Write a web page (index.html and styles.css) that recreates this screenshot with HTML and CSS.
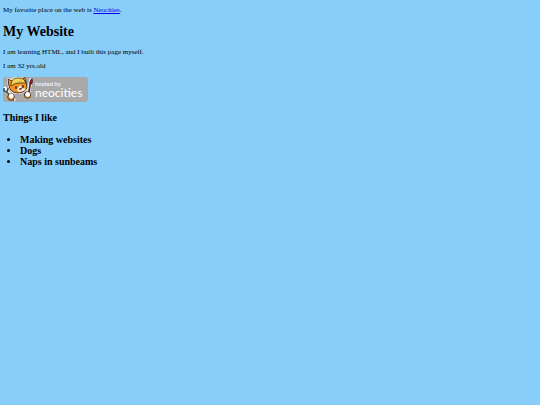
FILE: index.html
```html
<!DOCTYPE html>
<html lang="en">
<head>
    <meta charset="UTF-8">
    <meta name="viewport" content="width=device-width, initial-scale=1.0">
    <title>My Website</title>
    <link rel="stylesheet" href="styles.css">
</head>
<body>

<p>My favorite place on the web is <a href="https://neocities.org">Neocities</a>.</p>

<h1>My Website</h1>

<p>I am learning HTML, and I built this page myself.</p>

<p>I am 32 yrs.old</p>

<!-- Hosting badge -->
<svg class="badge" viewBox="0 0 85 26" role="img" aria-label="Hosted by Neocities">
    <rect width="85" height="25" rx="3" fill="#a9a9a9"/>
    <!-- white outline behind the cat and its tools -->
    <g fill="none" stroke="#fff" stroke-linejoin="round" stroke-linecap="round">
        <path d="M2 11l3 4 6 8" stroke-width="3"/>
        <path d="M25 18l3-15" stroke-width="3.400"/>
        <path d="M5 2l3 1q8-5 14 1l2 7q-3 5-10 5-7-1-8-7z" stroke-width="2"/>
    </g>
    <!-- fork -->
    <path d="M1 11v3l3 1 1-4M4 15l7 9" fill="none" stroke="#4b5256" stroke-width="1.6"/>
    <!-- paint brush -->
    <path d="M25.500 17l2-11" stroke="#5b2b20" stroke-width="1.8"/>
    <path d="M27 7q-1-3 2-5.500 1.500 3-.5 5.500z" fill="#9c1838" stroke="#331520" stroke-width="0.7"/>
    <!-- head -->
    <path d="M5 2l4 2 12-1 2 1 1 7q-3 5-10 5-7-1-8-7z" fill="#f39327" stroke="#33251c" stroke-width="0.9"/>
    <path d="M14 13l3-5 2 3 4 1q-3 3-7 3z" fill="#fff0dc"/>
    <!-- helmet -->
    <path d="M8 8q0-7 6-7 6-1 9 5l-6 0q-5 0-9 3z" fill="#ecc649" stroke="#4a3a16" stroke-width="0.8"/>
    <path d="M11 5q2-3 5-2m3 0l2 1" fill="none" stroke="#fff09a" stroke-width="0.8"/>
    <path d="M20 2l2-2 1 4z" fill="#f39327" stroke="#33251c" stroke-width="0.6"/>
    <!-- face -->
    <ellipse cx="13" cy="10.500" rx="0.8" ry="1.500" fill="#33251c"/>
    <ellipse cx="20" cy="9.500" rx="0.8" ry="1.500" fill="#33251c"/>
    <path d="M16 12q2 2 3-1z" fill="#8c2020" stroke="#33251c" stroke-width="0.5"/>
    <!-- paws -->
    <circle cx="8" cy="20" r="3.300" fill="#f39327" stroke="#33251c" stroke-width="0.8"/>
    <circle cx="8.300" cy="19" r="2.400" fill="#fff"/>
    <circle cx="24.500" cy="18" r="3.200" fill="#f39327" stroke="#33251c" stroke-width="0.8"/>
    <circle cx="24.800" cy="17.400" r="2.400" fill="#fff"/>
    <text class="badge-small" x="32" y="9">hosted by</text>
    <text class="badge-name" x="32" y="20">neocities</text>
</svg>

<h3>Things I like</h3>

<ul>
    <li>Making websites</li>
    <li>Dogs</li>
    <li>Naps in sunbeams</li>
</ul>

</body>
</html>
```
FILE: styles.css
```css
body {
    background-color: #87cefa;
    color: black;
    font-family: "Liberation Serif", "Times New Roman", serif;
    font-size: 7px;
    line-height: 8px;
    margin: 0 3px;
}
p {
    margin: 6px 0;
}
a {
    color: #0000ee;
}
h1 {
    font-size: 14px;
    line-height: 16px;
    margin: 10px 0 8px;
}
.badge {
    display: block;
    width: 85px;
    height: 26px;
    margin-top: 7px;
}
.badge text {
    fill: white;
    font-family: Lato, sans-serif;
}
.badge .badge-small {
    font-size: 6px;
}
.badge .badge-name {
    font-size: 12px;
}
h3 {
    font-size: 10px;
    line-height: 11px;
    margin: 9px 0 11px;
}
ul {
    font-size: 10px;
    font-weight: bold;
    line-height: 11px;
    margin: 11px 0;
    padding-left: 17px;
}
```
